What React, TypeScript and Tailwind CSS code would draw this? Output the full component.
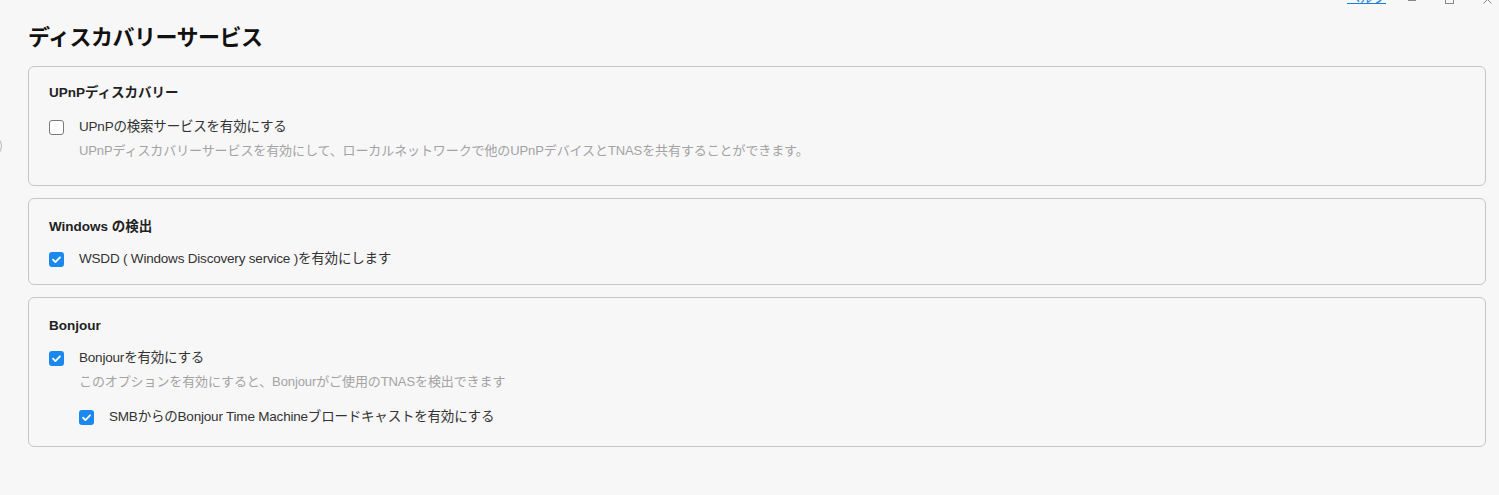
import React from "react";

const font = { fontFamily: '"Liberation Sans", "Noto Sans CJK JP", sans-serif' };

const Checkbox = ({ checked }: { checked: boolean }) =>
  checked ? (
    <span className="flex h-[15px] w-[15px] shrink-0 items-center justify-center rounded-[3px] bg-[#1a88ec]">
      <svg width="11" height="11" viewBox="0 0 12 12" fill="none">
        <path d="M2.2 6.2l2.6 2.6 5-5.2" stroke="#fff" strokeWidth="2" strokeLinecap="round" strokeLinejoin="round" />
      </svg>
    </span>
  ) : (
    <span className="h-[15px] w-[15px] shrink-0 rounded-[3px] border border-[#7a7a7a] bg-white" />
  );

const Option = ({
  checked,
  label,
  desc,
  className = "",
}: {
  checked: boolean;
  label: string;
  desc?: string;
  className?: string;
}) => (
  <div className={className}>
    <label className="flex h-5 items-center gap-[15px] text-[13.5px] tracking-[-0.2px] text-[#333]">
      <Checkbox checked={checked} />
      <span>{label}</span>
    </label>
    {desc && <p className="mt-[4px] pl-[30px] text-[13px] leading-5 tracking-[-0.1px] text-[#a3a3a3]">{desc}</p>}
  </div>
);

const Card = ({
  title,
  children,
  className = "",
  titleGap = "mb-[13px]",
}: {
  title: string;
  children: React.ReactNode;
  className?: string;
  titleGap?: string;
}) => (
  <section className={`rounded-[6px] border border-[#c6c6c6] px-5 ${className}`}>
    <h2 className={`${titleGap} text-[13.5px] font-bold leading-[18px] text-[#222]`}>{title}</h2>
    {children}
  </section>
);

export default function App() {
  return (
    <div className="relative h-[495px] w-full overflow-hidden bg-[#f7f7f7]" style={font}>
      {/* window chrome, clipped at the top */}
      <div className="absolute right-[7px] top-0 flex h-[7px] items-end">
        <a className="text-[13px] leading-[18px] text-[#1a7fd6] underline">ヘルプ</a>
        <span className="mb-[6px] ml-[22px] block h-px w-[8px] bg-[#888]" />
        <span className="mb-[3px] ml-[29px] block h-[9px] w-[9px] border border-[#888]" />
        <svg className="mb-[3px] ml-[29px]" width="9" height="9" viewBox="0 0 9 9">
          <path d="M0.5 0.5l8 8M8.5 0.5l-8 8" stroke="#888" strokeWidth="1" />
        </svg>
      </div>

      {/* partial control at left edge */}
      <span className="absolute left-[-22px] top-[134px] h-[24px] w-[24px] rounded-full border border-[#b5b5b5]" />

      <div className="pl-[28px] pr-[13px] pt-[22px]">
        <h1 className="mb-3 text-[22px] font-bold leading-8 tracking-[-0.5px] text-[#111]">ディスカバリーサービス</h1>

        <div className="flex flex-col gap-3">
          <Card title="UPnPディスカバリー" className="pb-[24px] pt-[17px]" titleGap="mb-[15px]">
            <Option
              checked={false}
              label="UPnPの検索サービスを有効にする"
              desc="UPnPディスカバリーサービスを有効にして、ローカルネットワークで他のUPnPデバイスとTNASを共有することができます。"
            />
          </Card>

          <Card title="Windows の検出" className="pb-[15px] pt-[19px]">
            <Option checked label="WSDD ( Windows Discovery service )を有効にします" />
          </Card>

          <Card title="Bonjour" className="pb-[19px] pt-[19px]">
            <Option
              checked
              label="Bonjourを有効にする"
              desc="このオプションを有効にすると、Bonjourがご使用のTNASを検出できます"
            />
            <Option
              checked
              className="mt-[15px] pl-[30px]"
              label="SMBからのBonjour Time Machineブロードキャストを有効にする"
            />
          </Card>
        </div>
      </div>
    </div>
  );
}
